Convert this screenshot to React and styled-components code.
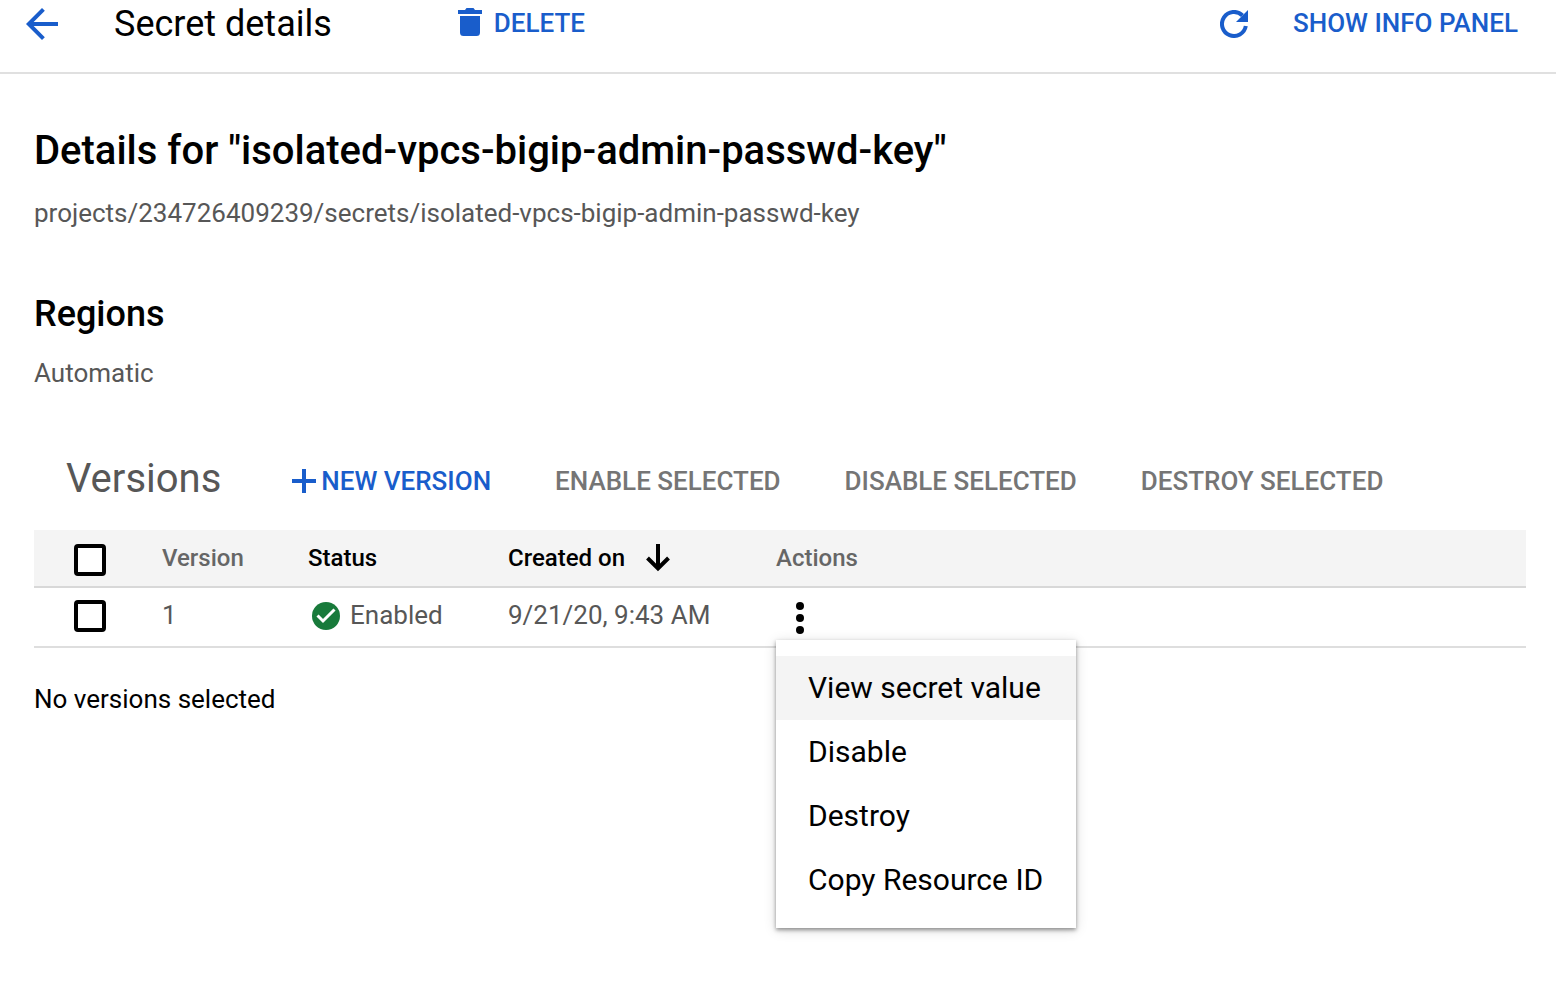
import React, { useState } from "react";
import styled, { createGlobalStyle } from "styled-components";

const GlobalStyle = createGlobalStyle`
  *, *::before, *::after { box-sizing: border-box; }
  body {
    margin: 0;
    background: #fff;
    color: #000;
    font-family: Roboto, "Liberation Sans", sans-serif;
    font-size: 26px;
    line-height: 32px;
  }
  h1, h2, h3, p { margin: 0; }
  button {
    margin: 0;
    padding: 0;
    border: 0;
    background: none;
    color: inherit;
    font: inherit;
    cursor: pointer;
  }
  svg { display: block; flex: none; }
`;

const Page = styled.div`
  min-height: 100vh;
`;

const TopBar = styled.header`
  display: flex;
  align-items: center;
  padding: 0 38px 24px 18px;
  border-bottom: 2px solid #e0e0e0;
`;

const IconButton = styled.button`
  display: flex;
  color: #195dcb;
`;

const PageTitle = styled.h1`
  margin-left: 48px;
  font-size: 36px;
  font-weight: 400;
  line-height: 48px;
`;

const TextButton = styled.button`
  display: flex;
  align-items: center;
  gap: ${(p) => p.$gap || 0}px;
  padding-bottom: 2px;
  color: #195dcb;
  font-weight: 500;
  white-space: nowrap;

  &:disabled {
    color: #757575;
    cursor: default;
  }
`;

const DeleteSlot = styled.div`
  flex: 1;
  display: flex;
  margin-left: 126px;
`;

const BarEnd = styled.div`
  display: flex;
  align-items: center;
  gap: 45px;
`;

const Content = styled.main`
  padding: 53px 30px 40px 34px;
`;

const Heading = styled.h2`
  font-size: ${(p) => p.$size}px;
  font-weight: 500;
  line-height: 48px;
`;

const Detail = styled.p`
  margin: 22px 0 61px;
  color: #575757;
`;

const RegionDetail = styled(Detail)`
  margin: 19px 0 64px;
`;

const Toolbar = styled.div`
  display: flex;
  align-items: center;
  gap: 64px;
  padding: 0 0 19px 32px;
`;

const ToolbarTitle = styled.h3`
  padding: 0 7px 6px 0;
  color: #575757;
  font-size: 40px;
  font-weight: 400;
  line-height: 52px;
`;

const Table = styled.table`
  width: 100%;
  border-collapse: separate;
  border-spacing: 0;
  table-layout: fixed;
`;

const Col = styled.col`
  width: ${(p) => p.$width};
`;

const Checkbox = styled.input`
  appearance: none;
  display: block;
  width: 32px;
  height: 32px;
  margin: 2px 0 0 40px;
  border: 4px solid #000;
  border-radius: 4px;
  background: #fff;

  &:checked {
    background: #195dcb;
  }
`;

const HeadCell = styled.th`
  height: 58px;
  padding: 0;
  background: #f4f4f4;
  border-bottom: 2px solid #d8d8d8;
  color: ${(p) => (p.$strong ? "#000" : "#666")};
  font-size: 24px;
  font-weight: 500;
  text-align: left;

  ${Checkbox} {
    margin-top: 4px;
  }
`;

const Cell = styled.td`
  height: 60px;
  padding: 0 0 4px;
  border-bottom: 2px solid #dedede;
  color: #575757;
`;

const StatusLine = styled.div`
  display: flex;
  align-items: center;
  gap: 10px;
  padding-left: 4px;
`;

const SortButton = styled.button`
  display: flex;
  align-items: center;
  gap: 21px;
`;

const MenuAnchor = styled.div`
  position: relative;
  display: flex;
`;

const MoreButton = styled.button`
  display: flex;
  justify-content: center;
  width: 48px;
  padding-top: 6px;
  color: #000;
`;

const Menu = styled.div`
  position: absolute;
  top: 100%;
  left: 0;
  z-index: 1;
  width: 300px;
  margin-top: 6px;
  padding: 16px 0;
  background: #fff;
  box-shadow: 0 2px 4px rgba(0, 0, 0, 0.4), 0 2px 12px rgba(0, 0, 0, 0.14);
`;

const MenuItem = styled.button`
  display: block;
  width: 100%;
  padding: 0 32px;
  background: ${(p) => (p.$active ? "#f4f4f4" : "transparent")};
  color: #000;
  font-size: 30px;
  line-height: 64px;
  text-align: left;
  white-space: nowrap;
`;

const Footnote = styled.p`
  margin-top: 35px;
`;

const BackIcon = () => (
  <svg width="48" height="48" viewBox="0 0 24 24" fill="currentColor" aria-hidden="true">
    <path d="M20 11H7.83l5.59-5.59L12 4l-8 8 8 8 1.41-1.41L7.83 13H20v-2z" />
  </svg>
);

const TrashIcon = () => (
  <svg width="24" height="30" viewBox="0 0 24 30" fill="currentColor" aria-hidden="true">
    <path d="M0 2h7l1.500-2h7L17 2h7v4H0zM2 8h20v16.500a3.500 3.500 0 0 1-3.500 3.500h-13A3.500 3.500 0 0 1 2 24.500z" />
  </svg>
);

const RefreshIcon = () => (
  <svg width="28" height="28" viewBox="0 0 28 28" aria-hidden="true">
    <path d="M25.800 16A12 12 0 1 1 22.500 5.500" fill="none" stroke="currentColor" strokeWidth="4" />
    <path d="M28 0v12H16z" fill="currentColor" />
  </svg>
);

const PlusIcon = () => (
  <svg width="24" height="24" viewBox="0 0 24 24" fill="currentColor" aria-hidden="true">
    <path d="M10 0h4v10h10v4H14v10h-4V14H0v-4h10z" />
  </svg>
);

const SortIcon = () => (
  <svg width="24" height="28" viewBox="0 0 24 28" fill="none" stroke="currentColor" strokeWidth="4" aria-hidden="true">
    <path d="M12 0v24M1.500 14L12 24.500 22.500 14" />
  </svg>
);

const CheckIcon = () => (
  <svg width="28" height="30" viewBox="0 -2 28 30" aria-hidden="true">
    <circle cx="14" cy="14" r="14" fill="#187a3b" />
    <path d="M5.500 13.500l5.500 5.500L22.500 7.500" fill="none" stroke="#fff" strokeWidth="3" />
  </svg>
);

const MoreIcon = () => (
  <svg width="8" height="32" viewBox="0 0 8 32" fill="currentColor" aria-hidden="true">
    <circle cx="4" cy="4" r="4" />
    <circle cx="4" cy="16" r="4" />
    <circle cx="4" cy="28" r="4" />
  </svg>
);

const menuItems = ["View secret value", "Disable", "Destroy", "Copy Resource ID"];

export default function App() {
  const [open, setOpen] = useState(true);

  return (
    <Page>
      <GlobalStyle />
      <TopBar>
        <IconButton type="button" aria-label="Back"><BackIcon /></IconButton>
        <PageTitle>Secret details</PageTitle>
        <DeleteSlot>
          <TextButton type="button" $gap={12}><TrashIcon />DELETE</TextButton>
        </DeleteSlot>
        <BarEnd>
          <IconButton type="button" aria-label="Refresh"><RefreshIcon /></IconButton>
          <TextButton type="button">SHOW INFO PANEL</TextButton>
        </BarEnd>
      </TopBar>

      <Content>
        <Heading $size={40}>Details for "isolated-vpcs-bigip-admin-passwd-key"</Heading>
        <Detail>projects/234726409239/secrets/isolated-vpcs-bigip-admin-passwd-key</Detail>

        <Heading $size={36}>Regions</Heading>
        <RegionDetail>Automatic</RegionDetail>

        <Toolbar>
          <ToolbarTitle>Versions</ToolbarTitle>
          <TextButton type="button" $gap={5}><PlusIcon />NEW VERSION</TextButton>
          <TextButton type="button" disabled>ENABLE SELECTED</TextButton>
          <TextButton type="button" disabled>DISABLE SELECTED</TextButton>
          <TextButton type="button" disabled>DESTROY SELECTED</TextButton>
        </Toolbar>

        <Table>
          <colgroup>
            <Col $width="128px" />
            <Col $width="146px" />
            <Col $width="200px" />
            <Col $width="268px" />
            <Col $width="auto" />
          </colgroup>
          <thead>
            <tr>
              <HeadCell><Checkbox type="checkbox" aria-label="Select all versions" /></HeadCell>
              <HeadCell>Version</HeadCell>
              <HeadCell $strong>Status</HeadCell>
              <HeadCell $strong>
                <SortButton type="button">Created on<SortIcon /></SortButton>
              </HeadCell>
              <HeadCell>Actions</HeadCell>
            </tr>
          </thead>
          <tbody>
            <tr>
              <Cell><Checkbox type="checkbox" aria-label="Select version 1" /></Cell>
              <Cell>1</Cell>
              <Cell><StatusLine><CheckIcon />Enabled</StatusLine></Cell>
              <Cell>9/21/20, 9:43 AM</Cell>
              <Cell>
                <MenuAnchor>
                  <MoreButton type="button" aria-label="Version actions" aria-expanded={open} onClick={() => setOpen(!open)}>
                    <MoreIcon />
                  </MoreButton>
                  {open && (
                    <Menu role="menu">
                      {menuItems.map((label, i) => (
                        <MenuItem key={label} type="button" role="menuitem" $active={i === 0}>{label}</MenuItem>
                      ))}
                    </Menu>
                  )}
                </MenuAnchor>
              </Cell>
            </tr>
          </tbody>
        </Table>
        <Footnote>No versions selected</Footnote>
      </Content>
    </Page>
  );
}
